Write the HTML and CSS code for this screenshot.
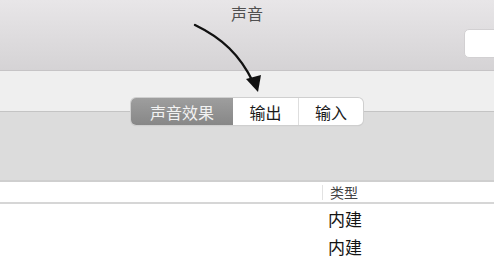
FILE: index.html
```html
<!doctype html>
<html lang="zh-CN">
	<head>
		<meta charset="UTF-8" />
		<title>声音</title>
		<link rel="stylesheet" href="styles.css">
	</head>
	<body>
		<div class="window">
			<div class="titlebar">
				<div class="title">声音</div>
				<div class="search"></div>
			</div>
			<div class="toolbar">
				<div class="band-light"></div>
				<div class="band-dark"></div>
				<div class="segmented">
					<span class="seg active">声音效果</span>
					<span class="seg">输出</span>
					<span class="seg">输入</span>
				</div>
			</div>
			<div class="table">
				<div class="thead">
					<div class="col-name"></div>
					<div class="col-type">类型</div>
				</div>
				<div class="row">
					<div class="col-name"></div>
					<div class="col-type">内建</div>
				</div>
				<div class="row">
					<div class="col-name"></div>
					<div class="col-type">内建</div>
				</div>
			</div>
			<!-- 标注箭头 -->
			<svg class="arrow" width="494" height="260" viewBox="0 0 494 260">
				<path d="M195 25 C 222 38, 240 55, 253 82" fill="none" stroke="#111" stroke-width="2.4" stroke-linecap="round" />
				<polygon points="246,79 261,75 258,92" fill="#111" />
			</svg>
		</div>
	</body>
</html>
```

FILE: styles.css
```css
* {
	margin: 0;
	padding: 0;
	box-sizing: border-box;
}
body {
	width: 494px;
	height: 260px;
	overflow: hidden;
	background: #fff;
	font-family: "Noto Sans CJK SC", "Liberation Sans", sans-serif;
}
.window {
	position: relative;
	width: 494px;
	height: 260px;
}
.titlebar {
	height: 71px;
	background: linear-gradient(#e8e6e8, #d5d3d5);
	border-bottom: 1px solid #c6c4c6;
	display: flex;
	justify-content: center;
	position: relative;
}
.title {
	margin-top: 2px;
	font-size: 16px;
	line-height: 22px;
	color: #505050;
}
.search {
	position: absolute;
	right: -8px;
	top: 29px;
	width: 38px;
	height: 29px;
	background: #fff;
	border: 1px solid #d2d0d2;
	border-radius: 5px;
}
.toolbar {
	position: relative;
}
.band-light {
	height: 41px;
	background: #efefef;
	border-bottom: 1px solid #c4c4c4;
}
.band-dark {
	height: 70px;
	background: #dcdcdc;
	border-bottom: 2px solid #cfcfcf;
}
.segmented {
	position: absolute;
	left: 131px;
	top: 27px;
	display: flex;
	height: 27px;
	border-radius: 5px;
	background: #fff;
	box-shadow: 0 0 0 1px #cfcfcf, 0 1px 1px rgba(0, 0, 0, 0.15);
	overflow: hidden;
}
.seg {
	display: flex;
	align-items: center;
	justify-content: center;
	width: 65px;
	font-size: 16px;
	color: #1a1a1a;
}
.seg + .seg {
	border-left: 1px solid #dedede;
}
.seg.active {
	width: 102px;
	color: #f2f2f2;
	background: linear-gradient(#9e9e9e, #878787);
}
.seg.active + .seg {
	border-left: none;
}
.thead,
.row {
	display: flex;
}
.thead {
	height: 22px;
	border-bottom: 2px solid #d6d6d6;
	font-size: 14px;
	color: #444;
	align-items: center;
}
.thead .col-type {
	border-left: 1px solid #e2e2e2;
	padding-left: 7px;
	line-height: 15px;
}
.col-name {
	width: 322px;
}
.row {
	height: 28px;
	align-items: center;
	font-size: 17px;
	color: #141414;
}
.row .col-type {
	padding-left: 6px;
}
.arrow {
	position: absolute;
	left: 0;
	top: 0;
	pointer-events: none;
}
```
